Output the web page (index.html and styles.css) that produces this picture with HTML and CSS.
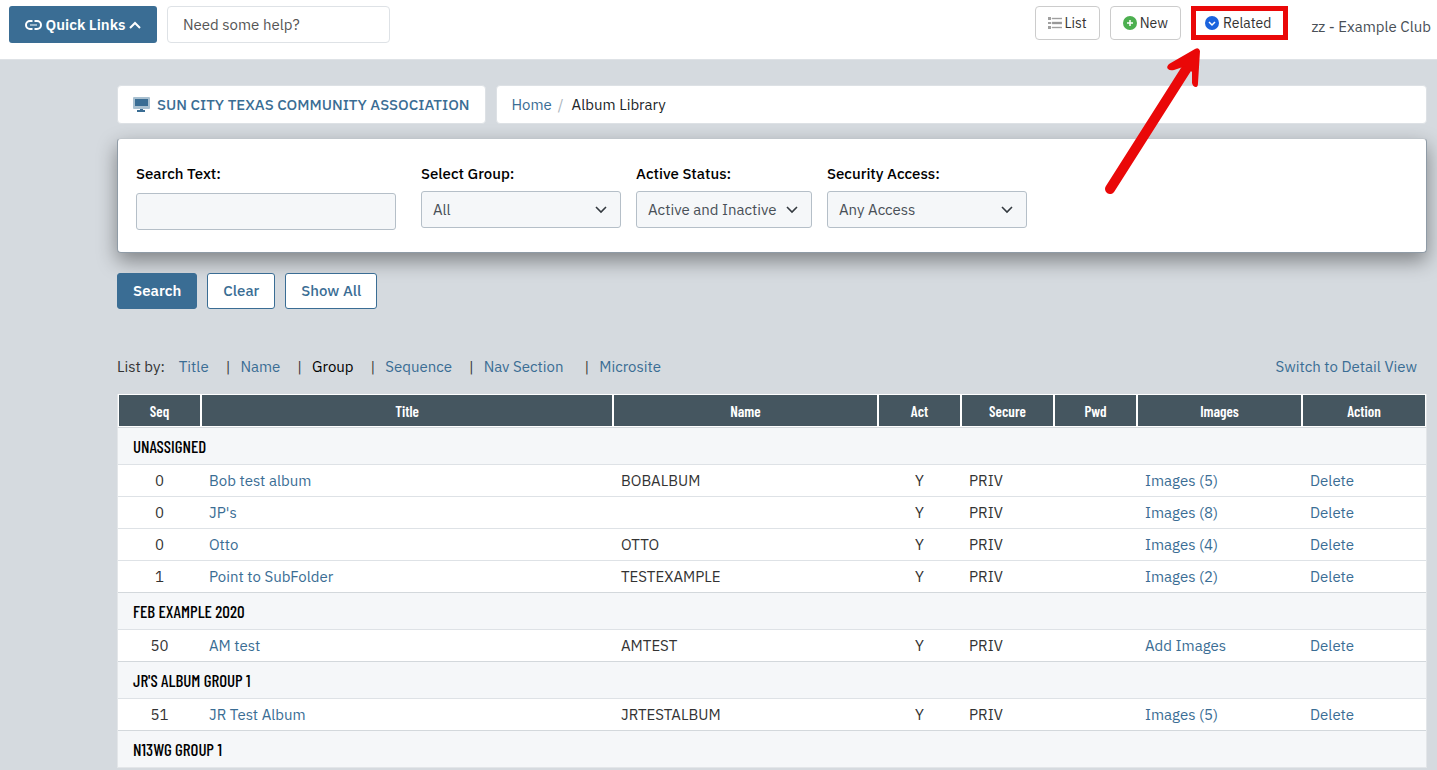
FILE: index.html
```html
<!DOCTYPE html>
<html lang="en">
<head>
    <meta charset="UTF-8">
    <meta name="viewport" content="width=device-width, initial-scale=1.0">
    <title>Album Library</title>
    <link rel="stylesheet" href="styles.css">
</head>
<body>
<header class="topbar">
    <button type="button" class="quick-links">
        <svg width="17" height="12" viewBox="0 0 17 12" fill="none" stroke="#fff" stroke-width="2">
            <path d="M7.500 2H5a4 4 0 0 0 0 8h2.500M9.500 2H12a4 4 0 0 1 0 8H9.500"/>
            <path d="M5 6h7" stroke="#9db8cb"/>
        </svg>
        Quick Links
        <svg width="12" height="8" viewBox="0 0 12 8" fill="none" stroke="#fff" stroke-width="2">
            <path d="M1 7l5-5 5 5"/>
        </svg>
    </button>
    <input type="text" class="help-input" placeholder="Need some help?" aria-label="Need some help?">

    <nav class="top-actions">
        <button type="button" class="top-btn">
            <svg width="14" height="12" viewBox="0 0 14 12">
                <path d="M0 0h3v3H0zM0 5h3v2H0zM0 9h3v3H0z" fill="#a0a0a0"/>
                <path d="M4 1h10v1H4zM4 5h10v2H4zM4 10h10v1H4z" fill="#8f8f8f" stroke="#b5b5b5" stroke-width="0.500"/>
            </svg>
            List
        </button>
        <button type="button" class="top-btn">
            <svg width="14" height="14" viewBox="0 0 14 14">
                <circle cx="7" cy="7" r="7" fill="#4caf50"/>
                <path d="M4 7h6M7 4v6" stroke="#fff" stroke-width="1.500"/>
            </svg>
            New
        </button>
        <div class="related">
            <button type="button" class="top-btn marked">
                <svg width="14" height="14" viewBox="0 0 14 14">
                    <circle cx="7" cy="7" r="7" fill="#1b63dd"/>
                    <path d="M4 6l3 3 3-3" fill="none" stroke="#fff" stroke-width="1.500"/>
                </svg>
                Related
            </button>
            <svg class="arrow" width="100" height="152" viewBox="0 0 100 152">
                <path d="M8 145L90 16" fill="none" stroke="#ea0808" stroke-width="10" stroke-linecap="round"/>
                <path d="M98 7Q97 3 93 5L67 20Q64 23 66 25 68 27 72 26L84 22 90 28 90 39Q91 43 94 43 96 43 96 39Z" fill="#ea0808"/>
            </svg>
        </div>
        <span class="club">zz - Example Club</span>
    </nav>
</header>

<main class="page">
    <div class="crumb-row">
        <a href="#" class="crumb-box site">
            <svg width="17" height="15" viewBox="0 0 17 15">
                <rect width="17" height="12" rx="1" fill="#a9c0d0"/>
                <rect x="2" y="2" width="13" height="7" fill="#3a6d94"/>
                <path d="M7 12h3v1h2v2H4v-2h3z" fill="#3a6d94"/>
            </svg>
            SUN CITY TEXAS COMMUNITY ASSOCIATION
        </a>
        <div class="crumb-box crumbs">
            <a href="#">Home</a><span class="slash">/</span><span class="here">Album Library</span>
        </div>
    </div>

    <form class="albums">
        <div class="search-panel">
            <div class="field text-field">
                <label for="search-text">Search Text:</label>
                <input type="text" id="search-text">
            </div>
            <div class="field">
                <label for="group">Select Group:</label>
                <select id="group"><option>All</option></select>
            </div>
            <div class="field status-field">
                <label for="status">Active Status:</label>
                <select id="status"><option>Active and Inactive</option></select>
            </div>
            <div class="field">
                <label for="access">Security Access:</label>
                <select id="access"><option>Any Access</option></select>
            </div>
        </div>
        <div class="buttons">
            <button type="button" class="btn primary">Search</button>
            <button type="button" class="btn">Clear</button>
            <button type="button" class="btn">Show All</button>
        </div>
    </form>

    <div class="list-by">
        <span>List by:</span>
        <ul>
            <li><a href="#">Title</a></li>
            <li><a href="#">Name</a></li>
            <li><a href="#" class="current">Group</a></li>
            <li><a href="#">Sequence</a></li>
            <li><a href="#">Nav Section</a></li>
            <li><a href="#">Microsite</a></li>
        </ul>
        <a href="#" class="switch">Switch to Detail View</a>
    </div>

    <table class="album-table">
        <thead>
            <tr>
                <th class="col-small">Seq</th>
                <th>Title</th>
                <th class="col-name">Name</th>
                <th class="col-small">Act</th>
                <th class="col-secure">Secure</th>
                <th class="col-small">Pwd</th>
                <th class="col-images">Images</th>
                <th class="col-action">Action</th>
            </tr>
        </thead>
        <tbody>
            <tr class="group"><td colspan="8">UNASSIGNED</td></tr>
            <tr><td class="mid">0</td><td><a href="#">Bob test album</a></td><td>BOBALBUM</td><td class="mid">Y</td><td>PRIV</td><td></td><td><a href="#">Images (5)</a></td><td><a href="#">Delete</a></td></tr>
            <tr><td class="mid">0</td><td><a href="#">JP's</a></td><td></td><td class="mid">Y</td><td>PRIV</td><td></td><td><a href="#">Images (8)</a></td><td><a href="#">Delete</a></td></tr>
            <tr><td class="mid">0</td><td><a href="#">Otto</a></td><td>OTTO</td><td class="mid">Y</td><td>PRIV</td><td></td><td><a href="#">Images (4)</a></td><td><a href="#">Delete</a></td></tr>
            <tr><td class="mid">1</td><td><a href="#">Point to SubFolder</a></td><td>TESTEXAMPLE</td><td class="mid">Y</td><td>PRIV</td><td></td><td><a href="#">Images (2)</a></td><td><a href="#">Delete</a></td></tr>
            <tr class="group"><td colspan="8">FEB EXAMPLE 2020</td></tr>
            <tr><td class="mid">50</td><td><a href="#">AM test</a></td><td>AMTEST</td><td class="mid">Y</td><td>PRIV</td><td></td><td><a href="#">Add Images</a></td><td><a href="#">Delete</a></td></tr>
            <tr class="group"><td colspan="8">JR'S ALBUM GROUP 1</td></tr>
            <tr><td class="mid">51</td><td><a href="#">JR Test Album</a></td><td>JRTESTALBUM</td><td class="mid">Y</td><td>PRIV</td><td></td><td><a href="#">Images (5)</a></td><td><a href="#">Delete</a></td></tr>
            <tr class="group"><td colspan="8">N13WG GROUP 1</td></tr>
        </tbody>
    </table>
</main>
</body>
</html>
```
FILE: styles.css
```css
* {
    box-sizing: border-box;
}

body {
    margin: 0;
    background-color: #d5dadf;
    color: #333;
    font-family: "IBM Plex Sans", "Noto Sans", sans-serif;
    font-size: 15px;
    line-height: 20px;
}

button, input, select {
    font: inherit;
}

a {
    color: #3a6d94;
    text-decoration: none;
}

/* top bar */
.topbar {
    display: flex;
    align-items: flex-start;
    gap: 10px;
    height: 60px;
    padding: 6px 6px 0 9px;
    background-color: #fff;
    border-bottom: 1px solid #dee2e6;
}

.quick-links {
    display: flex;
    align-items: center;
    justify-content: center;
    gap: 4px;
    width: 148px;
    height: 37px;
    padding: 0;
    border: none;
    border-radius: 3px;
    background-color: #3a6d94;
    color: #fff;
    font-weight: 600;
}

.help-input {
    width: 223px;
    height: 37px;
    padding: 0 15px;
    border: 1px solid #dee2e6;
    border-radius: 4px;
}

.help-input::placeholder {
    color: #555;
}

.top-actions {
    display: flex;
    align-items: flex-start;
    gap: 10px;
    margin-left: auto;
}

.top-btn {
    display: flex;
    align-items: center;
    gap: 3px;
    height: 34px;
    padding: 0 12px;
    border: 1px solid #ccc;
    border-radius: 4px;
    background-color: #fff;
    color: #333;
    font-size: 14px;
}

.related {
    position: relative;
}

.marked {
    gap: 4px;
    padding: 0 12px 0 9px;
    border: 5px solid #ea0808;
    border-radius: 0;
}

.arrow {
    position: absolute;
    top: 38px;
    right: 86px;
}

.club {
    margin-left: 13px;
    padding-top: 11px;
    color: #495057;
}

/* page */
.page {
    margin: 25px 10px 0 117px;
}

.crumb-row {
    display: flex;
    gap: 10px;
}

.crumb-box {
    display: flex;
    align-items: center;
    height: 39px;
    padding: 0 15px;
    border: 1px solid #dde1e5;
    border-radius: 4px;
    background-color: #fff;
}

.site {
    gap: 7px;
    font-weight: 500;
}

.crumbs {
    flex: 1;
}

.slash {
    padding: 0 8px 0 6px;
    color: #adb5bd;
}

.here {
    color: #212529;
}

.search-panel {
    display: flex;
    align-items: flex-start;
    gap: 15px;
    height: 115px;
    margin-top: 14px;
    padding: 25px 18px 0;
    border: 1px solid #8f9ba6;
    border-top-color: #c0c6cb;
    border-radius: 4px;
    background-color: #fff;
    box-shadow: 0 8px 20px rgba(0, 0, 0, 0.4);
}

.field {
    display: flex;
    flex-direction: column;
    gap: 7px;
    width: 200px;
}

.field label {
    color: #000;
    font-weight: 500;
}

.text-field {
    width: 260px;
    gap: 9px;
    margin-right: 10px;
}

.status-field {
    width: 176px;
}

.field input, .field select {
    width: 100%;
    height: 37px;
    padding: 0 11px;
    border: 1px solid #b5bfc8;
    border-radius: 3px;
    background-color: #f5f7f9;
    color: #495057;
}

.field select {
    appearance: none;
    background-image: url("data:image/svg+xml,%3Csvg xmlns='http://www.w3.org/2000/svg' width='12' height='8' fill='none' stroke='%23343a40' stroke-width='1.6'%3E%3Cpath d='M1 1l5 5 5-5'/%3E%3C/svg%3E");
    background-repeat: no-repeat;
    background-position: right 13px center;
}

.buttons {
    display: flex;
    gap: 10px;
    margin-top: 20px;
}

.btn {
    height: 36px;
    padding: 0 15px;
    border: 1px solid #3a6d94;
    border-radius: 3px;
    background-color: #fff;
    color: #3a6d94;
    font-weight: 500;
}

.primary {
    background-color: #3a6d94;
    color: #fff;
    font-weight: 600;
}

.list-by {
    display: flex;
    margin-top: 48px;
    padding-right: 10px;
}

.list-by ul {
    display: flex;
    margin: 0 0 0 14px;
    padding: 0;
    list-style: none;
}

.list-by li + li::before {
    content: "|";
    padding: 0 10px 0 17px;
    color: #333;
}

.list-by li:last-child {
    padding-left: 4px;
}

.list-by .current {
    color: #000;
}

.switch {
    margin-left: auto;
}

/* album table */
.album-table {
    width: 100%;
    margin-top: 17px;
    border: 1px solid #e3e6e9;
    border-top: none;
    border-spacing: 0;
    table-layout: fixed;
    background-color: #fff;
}

.album-table th {
    height: 33px;
    padding: 0;
    border: 1px solid #fff;
    background-color: #455660;
    color: #fff;
    font-family: "Barlow Condensed", "Liberation Sans Narrow", sans-serif;
    font-weight: 600;
}

.col-small {
    width: 83px;
}

.col-name {
    width: 265px;
}

.col-secure {
    width: 93px;
}

.col-images {
    width: 165px;
}

.col-action {
    width: 124px;
}

.album-table td {
    height: 32px;
    padding: 0 8px;
    border-top: 1px solid #dee2e6;
}

.album-table .mid {
    text-align: center;
}

.album-table .group td {
    height: 37px;
    padding: 0 15px;
    border-top-color: #d3d8dc;
    background-color: #f5f7f9;
    color: #000;
    font-family: "Barlow Condensed", "Liberation Sans Narrow", sans-serif;
    font-size: 17px;
    font-weight: 500;
}
```
